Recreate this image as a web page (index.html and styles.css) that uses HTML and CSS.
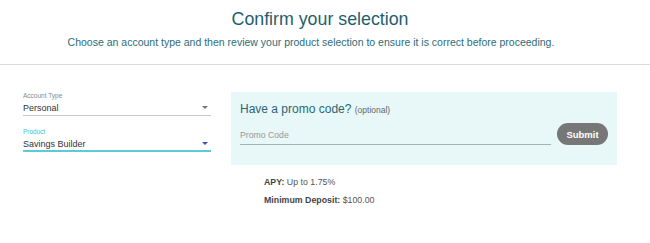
FILE: index.html
```html
<!DOCTYPE html>
<html lang="en">
<head>
  <meta charset="UTF-8">
  <meta name="viewport" content="width=device-width, initial-scale=1.0">
  <title>Confirm your selection</title>
  <link rel="stylesheet" href="styles.css">
</head>
<body>
  <header class="intro">
    <h1 class="intro-title">Confirm your selection</h1>
    <p class="intro-text">Choose an account type and then review your product selection to ensure it is correct before proceeding.</p>
  </header>

  <main class="selection">
    <div class="selects">
      <div class="field">
        <label class="field-label">Account Type</label>
        <div class="field-control">
          <span class="field-value">Personal</span>
          <span class="arrow"></span>
        </div>
      </div>
      <div class="field field-active">
        <label class="field-label">Product</label>
        <div class="field-control">
          <span class="field-value">Savings Builder</span>
          <span class="arrow"></span>
        </div>
      </div>
    </div>

    <div class="product">
      <form class="promo">
        <h2 class="promo-title">Have a promo code? <span class="promo-optional">(optional)</span></h2>
        <div class="promo-row">
          <input class="promo-input" type="text" placeholder="Promo Code">
          <button class="promo-submit" type="button">Submit</button>
        </div>
      </form>

      <div class="details">
        <p><b>APY:</b> Up to 1.75%</p>
        <p><b>Minimum Deposit:</b> $100.00</p>
      </div>
    </div>
  </main>
</body>
</html>
```

FILE: styles.css
```css
body {
  margin: 0;
  font-family: 'Liberation Sans', Arial, sans-serif;
  background: #fff;
  color: #333;
}

.intro {
  text-align: center;
  padding-top: 8px;
  padding-bottom: 15px;
  border-bottom: 1px solid #dcdcdc;
}

.intro-title {
  margin: 0;
  padding-right: 10px;
  font-size: 17.8px;
  line-height: 22px;
  font-weight: normal;
  color: #1e5f6d;
}

.intro-text {
  margin: 5px 0 0;
  padding-right: 28px;
  font-size: 10.5px;
  line-height: 14px;
  color: #2c6c78;
}

.selection {
  display: flex;
  gap: 20px;
  padding: 27px 33px 0 23px;
}

.selects {
  width: 188px;
  display: flex;
  flex-direction: column;
  gap: 12px;
}

.field-label {
  display: block;
  font-size: 6.5px;
  line-height: 8px;
  color: #888;
}

.field-control {
  display: flex;
  align-items: center;
  justify-content: space-between;
  height: 13px;
  margin-top: 1px;
  border-bottom: 1px solid #c8c8c8;
  padding-bottom: 1px;
}

.field-value {
  font-size: 9px;
  line-height: 12px;
  color: #333;
}

.arrow {
  width: 0;
  height: 0;
  margin-right: 3px;
  border-left: 3px solid transparent;
  border-right: 3px solid transparent;
  border-top: 3px solid #777;
}

.field-active .field-label {
  color: #3ec3cf;
}

.field-active .field-control {
  border-bottom: 2px solid #5ccbd6;
  padding-bottom: 0;
}

.field-active .arrow {
  border-top-color: #3f51b5;
}

.product {
  flex: 1;
}

.promo {
  background: #e8f7f7;
  padding: 10px 9px 20px 9px;
}

.promo-title {
  margin: 0;
  font-size: 12px;
  line-height: 14px;
  font-weight: normal;
  color: #2a6677;
}

.promo-optional {
  font-size: 8.5px;
  color: #666;
}

.promo-row {
  display: flex;
  align-items: flex-end;
  gap: 6px;
  margin-top: 6px;
}

.promo-input {
  flex: 1;
  background: none;
  border: none;
  border-bottom: 1px solid #a9b2b2;
  padding: 0 0 3px;
  font-family: inherit;
  font-size: 8.7px;
  line-height: 12px;
  color: #333;
  outline: none;
}

.promo-input::placeholder {
  color: #999;
}

.promo-submit {
  width: 51px;
  height: 22px;
  border: none;
  border-radius: 11px;
  background: #777;
  color: #fff;
  font-family: inherit;
  font-weight: bold;
  font-size: 9.5px;
  padding: 0;
  cursor: pointer;
}

.details {
  padding: 11px 0 0 33px;
}

.details p {
  margin: 0 0 6px;
  font-size: 8.8px;
  line-height: 12px;
  color: #555;
}

.details b {
  color: #444;
}
```
